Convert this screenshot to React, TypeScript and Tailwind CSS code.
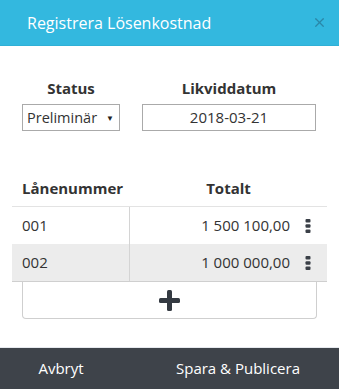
import { X } from 'lucide-react';

function DotsIcon() {
  return (
    <svg width="6" height="14" viewBox="0 0 6 14" className="shrink-0">
      <rect x="0.5" y="0" width="5" height="3.6" rx="1" fill="#3a3f47" />
      <rect x="0.5" y="5.2" width="5" height="3.6" rx="1" fill="#3a3f47" />
      <rect x="0.5" y="10.4" width="5" height="3.6" rx="1" fill="#3a3f47" />
    </svg>
  );
}

function PlusIcon() {
  return (
    <svg width="21" height="21" viewBox="0 0 21 21">
      <rect x="8" y="0" width="5" height="21" rx="1.5" fill="#343a42" />
      <rect x="0" y="8" width="21" height="5" rx="1.5" fill="#343a42" />
    </svg>
  );
}

const rows = [
  { id: '001', total: '1 500 100,00', bg: 'bg-white' },
  { id: '002', total: '1 000 000,00', bg: 'bg-[#ececec]' },
];

export default function App() {
  return (
    <div
      className="w-[339px] h-[389px] flex flex-col bg-white text-[#333]"
      style={{ fontFamily: '"Open Sans", "Noto Sans", sans-serif' }}
    >
      {/* Header */}
      <div className="h-[46px] shrink-0 bg-[#33b8df] flex items-center justify-between pl-[27px] pr-[12px] border-b border-[#2fb0d6]">
        <span className="text-white text-[16px] leading-none">Registrera Lösenkostnad</span>
        <X size={15} strokeWidth={2} className="text-[#2a87a8]" />
      </div>

      {/* Form */}
      <div className="flex px-[22px] gap-[22px] mt-[33px]">
        <div className="w-[98px] flex flex-col items-center">
          <span className="text-[15px] font-bold leading-[18px] text-[#333]">Status</span>
          <div className="mt-[7px] w-full h-[27px] border border-[#aaa] flex items-center justify-between pl-[4px] pr-[5px]">
            <span className="text-[14.5px]">Preliminär</span>
            <span className="text-[8px] leading-none text-[#222]">▼</span>
          </div>
        </div>
        <div className="w-[174px] flex flex-col items-center">
          <span className="text-[15px] font-bold leading-[18px] text-[#333]">Likviddatum</span>
          <div className="mt-[7px] w-full h-[27px] border border-[#aaa] flex items-center justify-center">
            <span className="text-[15px]">2018-03-21</span>
          </div>
        </div>
      </div>

      {/* Table */}
      <div className="mx-[12px] mt-[40px]">
        <div className="flex h-[36px] items-center border-b border-[#e3e3e3]">
          <div className="w-[118px] pl-[10px] text-[15px] font-bold">Lånenummer</div>
          <div className="flex-1 text-center text-[15px] font-bold">Totalt</div>
        </div>
        {rows.map((r) => (
          <div key={r.id} className={`flex h-[37px] items-center ${r.bg}`}>
            <div className="w-[118px] h-full flex items-center pl-[10px] border-r border-[#d4d4d4] text-[15px]">
              {r.id}
            </div>
            <div className="flex-1 h-full flex items-center justify-end pr-[16px] gap-[15px] text-[15px]">
              <span>{r.total}</span>
              <DotsIcon />
            </div>
          </div>
        ))}
        <div className="border-t border-[#cfcfcf]" />
      </div>

      {/* Add row */}
      <div className="mx-[22px] h-[37px] border border-t-0 border-[#cfcfcf] rounded-b-[4px] flex items-center justify-center">
        <PlusIcon />
      </div>

      {/* Footer */}
      <div className="mt-auto h-[42px] bg-[#3e434a] border-t border-[#e6e9ee] flex items-center text-white text-[15px]">
        <button className="w-[122px] text-center">Avbryt</button>
        <button className="pl-[54px]">Spara &amp; Publicera</button>
      </div>
    </div>
  );
}
